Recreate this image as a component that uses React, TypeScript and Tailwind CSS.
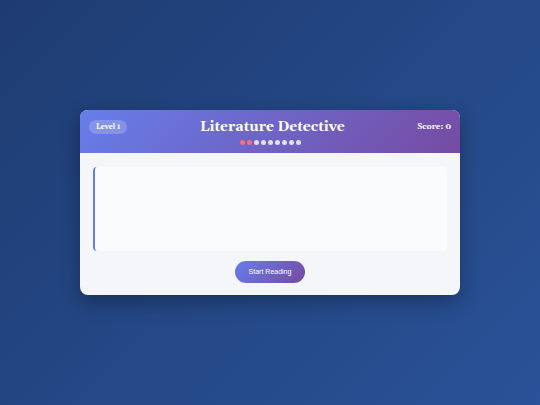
import { useState } from 'react'

const TOTAL_STEPS = 9

export default function App() {
  const [passage] = useState('')
  const level = 1
  const score = 0
  const found = 2

  const steps = Array.from({ length: TOTAL_STEPS }, (_, index) => index < found)

  return (
    <div className="min-h-screen flex items-center justify-center px-4 py-6 bg-[linear-gradient(135deg,#1e3c72_0%,#2a5298_100%)] font-['Gelasio','Georgia','Liberation_Serif',serif]">
      <main className="w-full max-w-[380px] rounded-lg overflow-hidden bg-[#f4f6fa] shadow-[0_7px_20px_rgba(0,0,0,0.3)]">
        {/* Header */}
        <header className="px-[9px] pt-[9px] pb-2 text-white bg-[linear-gradient(135deg,#667eea_0%,#764ba2_100%)]">
          <div className="flex items-center justify-between">
            <span className="rounded-full bg-white/20 px-[7px] text-[7px] leading-[14px] font-bold">Level {level}</span>
            <h1 className="text-[14px] leading-4 font-bold">Literature Detective</h1>
            <span className="text-[8px] leading-4 font-bold">Score: {score}</span>
          </div>

          {/* Progress dots */}
          <div className="flex justify-center gap-[2px] mt-[5px]">
            {steps.map((done, index) => (
              <span
                key={index}
                className={`size-[5px] rounded-full ${done ? 'bg-[#f56f7c]' : 'bg-[#e1dff2]'}`}
              ></span>
            ))}
          </div>
        </header>

        {/* Reading area */}
        <section className="px-[13px] pt-[14px] pb-3 flex flex-col items-center gap-[10px]">
          <div className="w-full min-h-[84px] rounded border-l-2 border-[#667eea] bg-[#fafbfd] p-3 text-xs text-slate-700">
            {passage}
          </div>
          <button
            type="button"
            className="rounded-full px-[14px] text-[7px] leading-[22px] text-white font-['Liberation_Sans',sans-serif] bg-[linear-gradient(135deg,#667eea_0%,#764ba2_100%)]"
          >
            Start Reading
          </button>
        </section>
      </main>
    </div>
  )
}
